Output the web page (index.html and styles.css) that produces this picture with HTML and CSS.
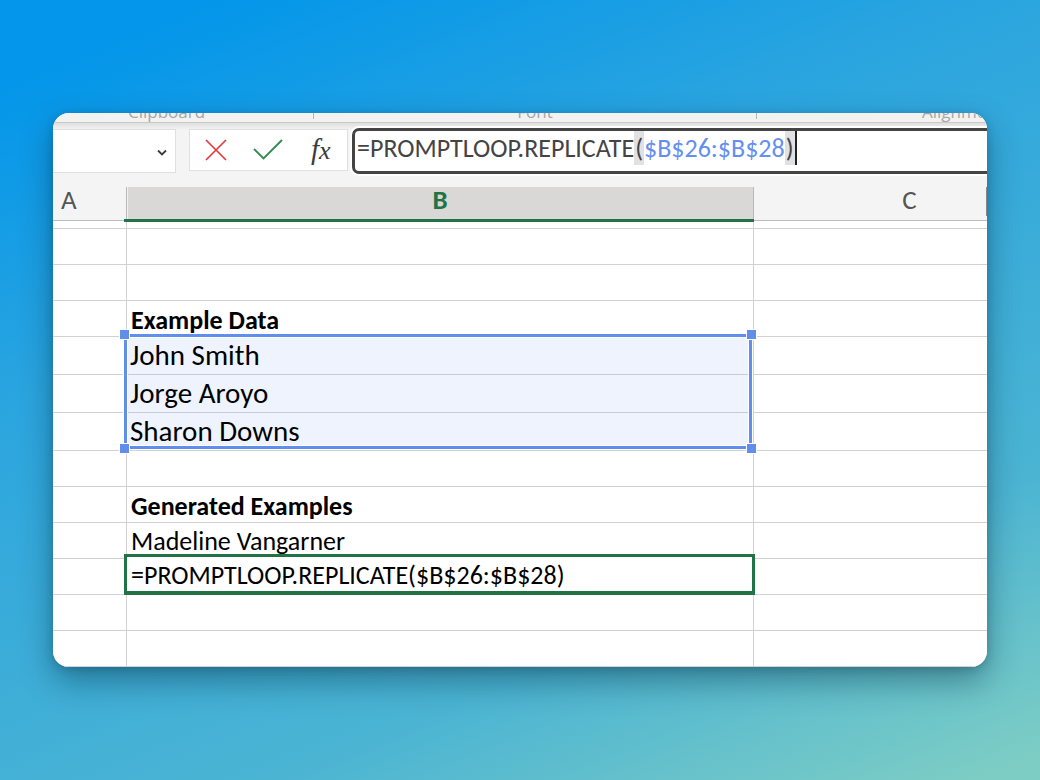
FILE: index.html
```html
<!DOCTYPE html>
<html lang="en">
<head>
<meta charset="utf-8">
<title>Spreadsheet formula</title>
<link rel="stylesheet" href="styles.css">
</head>
<body>
<main class="window">
  <div class="ribbon">
    <span class="group group-clipboard">Clipboard</span>
    <span class="group group-font">Font</span>
    <span class="group group-align">Alignment</span>
  </div>
  <div class="formula-bar">
    <button class="name-box" type="button" aria-label="Name box">
      <svg width="12" height="8" viewBox="0 0 12 8"><path d="M2 1.500 6 5.500 10 1.500" fill="none" stroke="#3b3b3b" stroke-width="1.8"/></svg>
    </button>
    <div class="actions">
      <button class="action" type="button" aria-label="Cancel">
        <svg width="24" height="24" viewBox="0 0 24 24"><path d="M2 2 22 22M22 2 2 22" fill="none" stroke="#e23b3b" stroke-width="1.7"/></svg>
      </button>
      <button class="action" type="button" aria-label="Enter">
        <svg width="30" height="24" viewBox="0 0 30 24"><path d="M1 11 10.500 20.500 29 2" fill="none" stroke="#348a50" stroke-width="1.9"/></svg>
      </button>
      <button class="action fx" type="button" aria-label="Insert function"><span class="fx-f">f</span><span class="fx-x">x</span></button>
    </div>
    <div class="formula" role="textbox" aria-label="Formula" contenteditable="true" spellcheck="false"><span>=PROMPTLOOP.REPLICATE</span><span class="paren">(</span><span class="ref">$B$26:$B$28</span><span class="paren caret">)</span></div>
  </div>
  <table class="sheet">
    <colgroup><col class="col-a"><col class="col-b"><col></colgroup>
    <thead>
      <tr><th class="head-a" scope="col">A</th><th class="head-b" scope="col">B</th><th class="head-c" scope="col">C</th></tr>
    </thead>
    <tbody>
      <tr class="stub"><td></td><td></td><td></td></tr>
      <tr><td></td><td></td><td></td></tr>
      <tr><td></td><td></td><td></td></tr>
      <tr><td></td><td class="title">Example Data</td><td></td></tr>
      <tr class="tall"><td></td><td class="anchor"><span class="range"><i class="handle tl"></i><i class="handle tr"></i><i class="handle bl"></i><i class="handle br"></i></span><span class="value">John Smith</span></td><td></td></tr>
      <tr class="tall"><td></td><td><span class="value">Jorge Aroyo</span></td><td></td></tr>
      <tr class="tall"><td></td><td><span class="value">Sharon Downs</span></td><td></td></tr>
      <tr><td></td><td></td><td></td></tr>
      <tr><td></td><td class="title">Generated Examples</td><td></td></tr>
      <tr><td></td><td class="result">Madeline Vangarner</td><td></td></tr>
      <tr><td></td><td class="anchor"><span class="active-cell">=PROMPTLOOP.REPLICATE($B$26:$B$28)</span></td><td></td></tr>
      <tr><td></td><td></td><td></td></tr>
      <tr><td></td><td></td><td></td></tr>
    </tbody>
  </table>
</main>
</body>
</html>
```
FILE: styles.css
```css
* { box-sizing: border-box; }

body {
  margin: 0;
  min-height: 100vh;
  padding: 113px 53px;
  background: linear-gradient(158deg, #0396ea 7%, #2ba5df 34%, #4bb4d3 74%, #7dcdc4 98%);
  font-family: Carlito, Calibri, Lato, "Open Sans", sans-serif;
  color: #000;
}

.window {
  overflow: hidden;
  border-radius: 16px;
  background: #f4f4f4;
  box-shadow: 0 14px 32px rgba(0, 40, 60, .42), 0 2px 8px rgba(0, 40, 60, .2);
}

.ribbon {
  display: grid;
  grid-template-columns: 260px 444px 1fr;
  height: 10px;
  overflow: hidden;
  border-bottom: 1px solid #c9c9c9;
  background: #f3f2f1;
  color: #a6a6a6;
  font: 17px/20px "Open Sans", sans-serif;
}

.group {
  display: flex;
  align-items: flex-end;
  height: 9px;
  overflow: hidden;
  white-space: nowrap;
}

.group-clipboard { padding-left: 75px; }
.group-align { padding-left: 165px; }

.group-font {
  justify-content: center;
  background: linear-gradient(#b5b5b5, #b5b5b5) left top / 1px 6px no-repeat,
    linear-gradient(#b5b5b5, #b5b5b5) right top / 1px 6px no-repeat;
}

.formula-bar {
  display: flex;
  align-items: flex-start;
  height: 64px;
  padding-top: 5px;
  background: linear-gradient(#dfdfdf, #f4f4f4 7px);
}

.name-box {
  display: flex;
  align-items: center;
  justify-content: flex-end;
  width: 123px;
  height: 44px;
  margin: 1px 13px 0 0;
  padding: 4px 7px 0 0;
  border: 1px solid #e0e0e0;
  border-left: 0;
  background: #fff;
}

.actions {
  display: flex;
  width: 159px;
  height: 42px;
  margin-top: 1px;
  border: 1px solid #e0e0e0;
  background: #fff;
}

.action {
  display: flex;
  flex: 1;
  align-items: center;
  justify-content: center;
  padding: 0;
  border: 0;
  background: none;
}

.fx {
  align-items: baseline;
  color: #3b3b3b;
  font: italic 29px/38px "Liberation Serif", serif;
}

.fx-x { font-size: 26px; }

.formula {
  flex: 1;
  min-width: 0;
  height: 46px;
  margin-left: 4px;
  padding: 0 0 0 2px;
  border: 3px solid #444;
  border-right: 0;
  border-radius: 7px 0 0 7px;
  outline: 0;
  background: #fff;
  box-shadow: 0 0 0 2px #fff;
  color: #444;
  font-size: 26px;
  line-height: 34px;
  white-space: nowrap;
}

.formula span { display: inline-block; height: 34px; }
.formula .ref { color: #648fee; }
.formula .paren { padding: 0 1px; background: #e1e1e3; }
.formula .caret { border-right: 2px solid #222; }

.sheet {
  width: 100%;
  table-layout: fixed;
  border-collapse: separate;
  border-spacing: 0;
  background: #fff;
}

.col-a { width: 74px; }
.col-b { width: 627px; }

th {
  height: 34px;
  padding: 0 0 8px;
  border-bottom: 1px solid #bdbdbd;
  background: #f4f4f4;
  color: #555;
  font-size: 27px;
  font-weight: 400;
  line-height: 25px;
}

.head-a { padding-left: 8px; text-align: left; }

.head-b {
  position: relative;
  border-right: 1px solid #b8b8b8;
  background: #d9d8d6;
  box-shadow: inset 1px 0 #f1f1f1, -1px 0 #b8b8b8;
  color: #217346;
  font-weight: 700;
}

.head-b::after {
  position: absolute;
  right: -1px;
  bottom: -2px;
  left: -3px;
  height: 3px;
  background: #217346;
  content: "";
}

.head-c {
  padding-left: 78px;
  background: linear-gradient(#888, #888) right top / 1px 29px no-repeat #f4f4f4;
}

td {
  height: 36px;
  padding: 0 4px;
  border-right: 1px solid #d2d2d2;
  border-bottom: 1px solid #d2d2d2;
  font-size: 26px;
  line-height: 32px;
  vertical-align: bottom;
  white-space: nowrap;
}

td:last-child { border-right: 0; }
.stub td { height: 8px; }

.title { font-weight: 700; }
.tall td { height: 38px; padding: 0 3px 3px; font-size: 29px; }
.result { padding-bottom: 1px; }
.anchor { position: relative; }

.value {
  position: relative;
  z-index: 2;
}

.range {
  position: absolute;
  z-index: 1;
  top: -3px;
  right: 1px;
  left: -3px;
  height: 115px;
  border: 3px solid #628eeb;
  outline: 1px solid #fff;
  background: rgba(98, 142, 235, .11);
  background-clip: padding-box;
  box-shadow: inset 0 0 0 1px #fff;
}

.handle {
  position: absolute;
  width: 11px;
  height: 11px;
  border: 1px solid #fff;
  background: #628eeb;
}

.tl, .tr { top: -8px; }
.bl, .br { bottom: -8px; }
.tl, .bl { left: -8px; }
.tr, .br { right: -8px; }

.active-cell {
  position: absolute;
  z-index: 1;
  top: -5px;
  right: -2px;
  bottom: -1px;
  left: -3px;
  padding-left: 4px;
  border: 3px solid #217346;
  border-bottom-width: 4px;
  background: #fff;
  line-height: 36px;
}
```
